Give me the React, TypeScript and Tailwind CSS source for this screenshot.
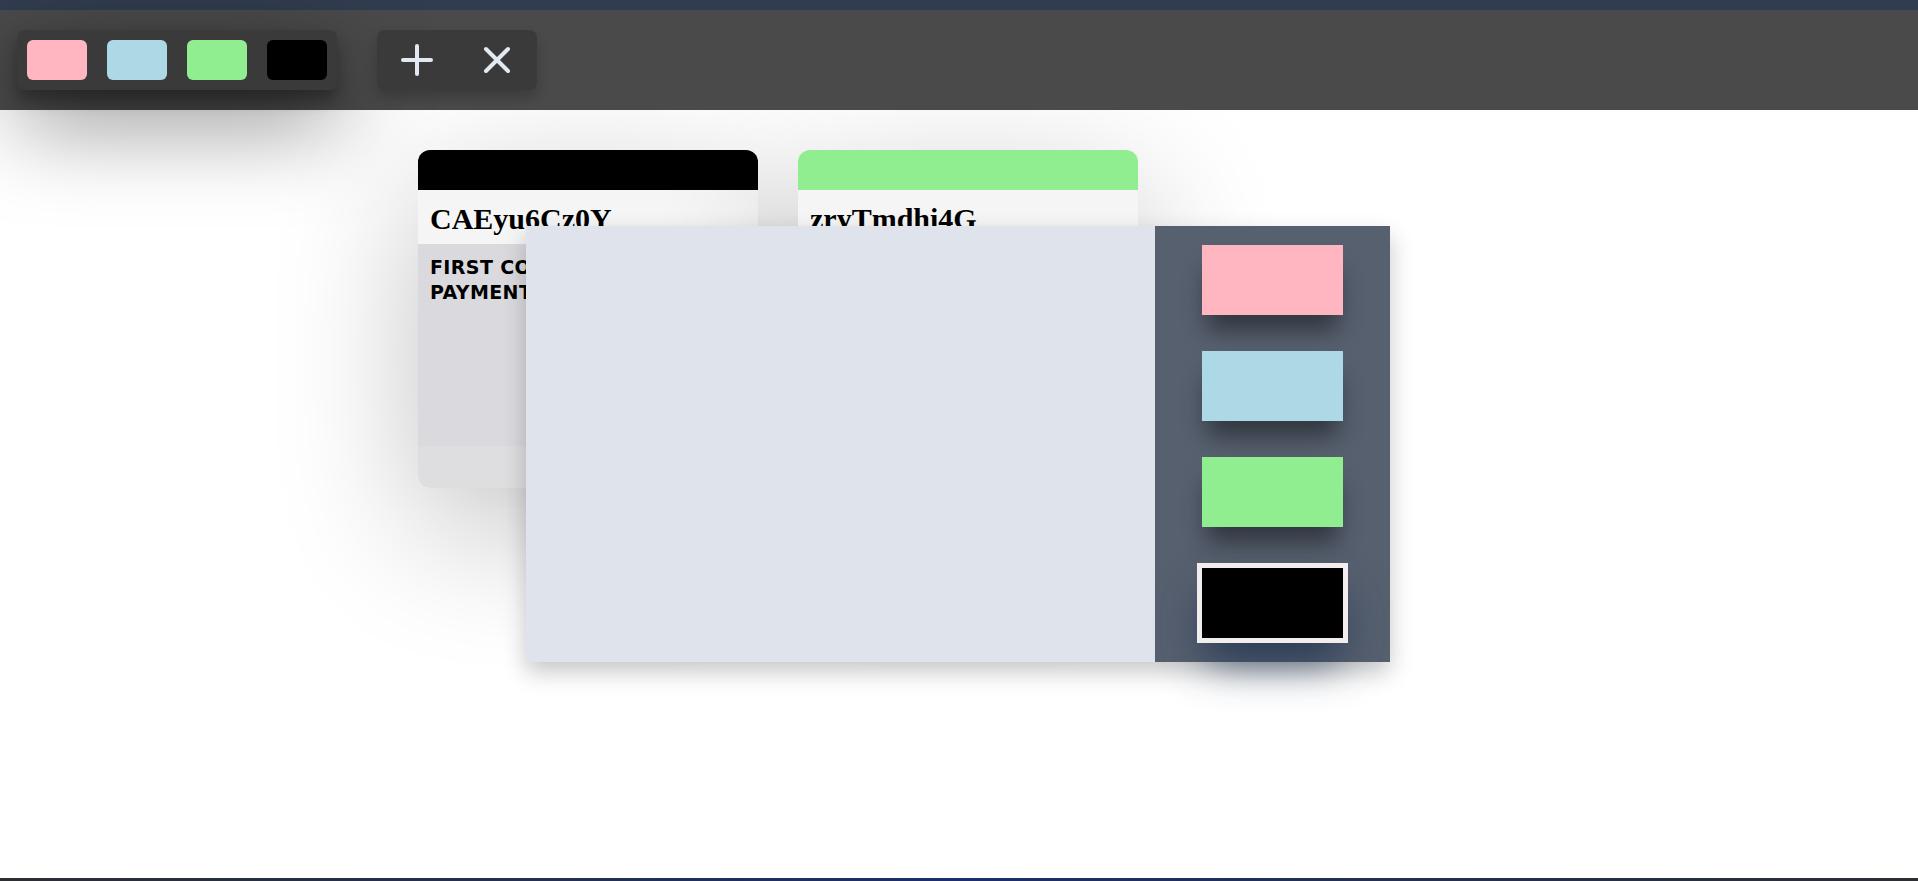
import React from 'react';

const PALETTE = ['#ffb6c1', '#add8e6', '#90ee90', '#000000'];

const CARDS = [
  { id: 'CAEyu6Cz0Y', color: '#000000', body: 'FIRST CONSULTATION PAYMENT' },
  { id: 'zryTmdhi4G', color: '#90ee90', body: 'SECOND PAYMENT' },
];

const PlusIcon = () => (
  <svg width="36" height="36" viewBox="0 0 36 36" fill="none" stroke="#e3e9f1" strokeWidth="4" strokeLinecap="round">
    <path d="M4 18h28M18 4v28" />
  </svg>
);

const CloseIcon = () => (
  <svg width="36" height="36" viewBox="0 0 36 36" fill="none" stroke="#e3e9f1" strokeWidth="4" strokeLinecap="round">
    <path d="M7 7l22 22M29 7L7 29" />
  </svg>
);

const Card = ({ id, color, body }: { id: string; color: string; body: string }) => (
  <div className="w-[340px] h-[338px] rounded-xl overflow-hidden flex flex-col shadow-[0_40px_140px_rgba(0,0,0,0.24)]">
    <div className="h-10" style={{ background: color }} />
    <div className="bg-[#f5f5f6] pl-3 pt-[12px] pb-[8px] h-[54px]">
      <h2 className="text-[30px] leading-[34px] font-bold text-black" style={{ fontFamily: '"Liberation Serif", serif' }}>
        {id}
      </h2>
    </div>
    <div className="flex-1 bg-[#dadade] px-3 pt-[11px]">
      <p
        className="text-[19px] leading-[25px] font-bold uppercase text-black tracking-[0.02em]"
        style={{ fontFamily: '"DejaVu Sans", sans-serif' }}
      >
        {body}
      </p>
    </div>
    <div className="h-[42px] bg-[#dedee1]" />
  </div>
);

export default function App() {
  const selected = 3;

  return (
    <div className="relative min-h-screen flex flex-col bg-white overflow-hidden">
      <div className="h-[10px] bg-[#323c50]" />

      {/* Toolbar */}
      <header className="relative z-10 h-[100px] bg-[#4a4a4a] flex items-center pl-[17px] gap-10">
        <div className="flex gap-5 p-[10px] rounded-lg bg-[#3a3a3a] shadow-[0_10px_15px_rgba(0,0,0,0.3),0_30px_90px_rgba(0,0,0,0.5)]">
          {PALETTE.map(c => (
            <button key={c} className="w-[60px] h-10 rounded-md" style={{ background: c }} />
          ))}
        </div>
        <div className="flex rounded-lg bg-[#3a3a3a] shadow-[0_8px_14px_rgba(0,0,0,0.2)]">
          <button className="w-20 h-[60px] flex items-center justify-center">
            <PlusIcon />
          </button>
          <button className="w-20 h-[60px] flex items-center justify-center">
            <CloseIcon />
          </button>
        </div>
      </header>

      {/* Cards */}
      <main className="flex-1 flex items-start gap-10 pl-[418px] pt-10">
        {CARDS.map(card => (
          <Card key={card.id} {...card} />
        ))}
      </main>

      <div className="h-[3px] bg-gradient-to-r from-[#2c2e33] via-[#1c2f6a] to-[#2c2e33]" />

      {/* Colour picker overlay */}
      <div className="absolute z-20 left-[526px] top-[226px] w-[864px] h-[436px] flex shadow-[0_10px_22px_rgba(0,0,0,0.22)]">
        <div className="flex-1 bg-[#dfe3eb]" />
        <div className="w-[235px] bg-[#57606f] flex flex-col items-center justify-center gap-9">
          {PALETTE.map((c, i) => (
            <button
              key={c}
              className={
                i === selected
                  ? 'box-content w-[141px] h-[70px] border-[5px] border-[#f3eded] shadow-[0_25px_45px_-8px_rgba(30,50,80,0.85)]'
                  : 'w-[141px] h-[70px] shadow-[0_20px_25px_-5px_rgba(0,0,0,0.45)]'
              }
              style={{ background: c }}
            />
          ))}
        </div>
      </div>
    </div>
  );
}
